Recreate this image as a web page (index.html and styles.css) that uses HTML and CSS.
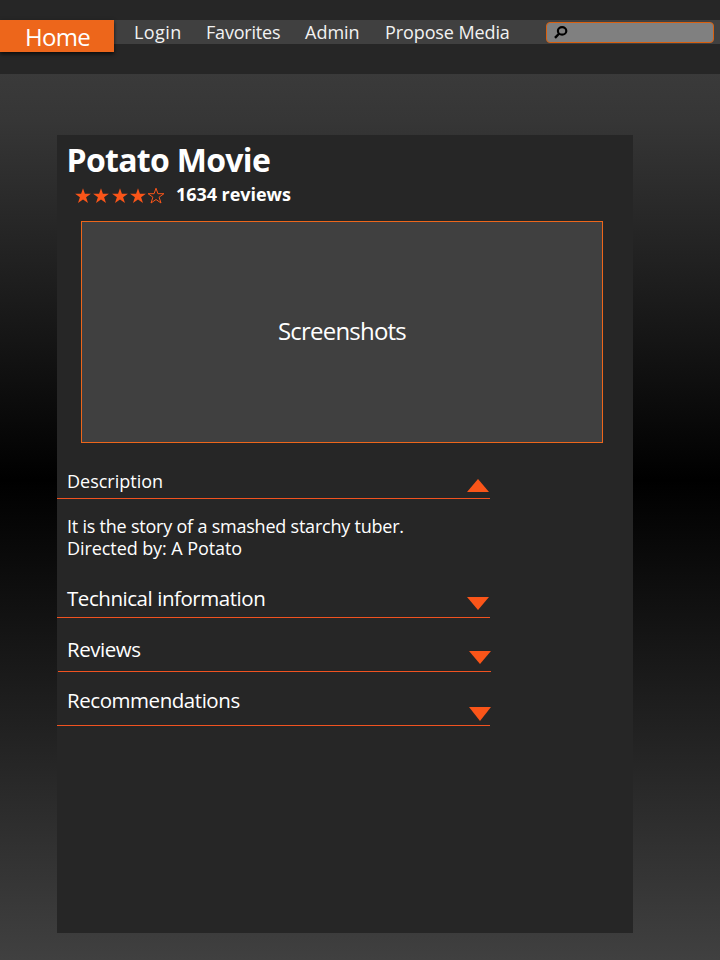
FILE: index.html
```
<!DOCTYPE html>
<html lang="en">
<head>
<meta charset="utf-8">
<title>Potato Movie</title>
<link rel="stylesheet" href="styles.css">
</head>
<body>
<svg class="defs" width="0" height="0"><defs><path id="star" d="M8 0.2 L9.9 5.7 L15.9 5.7 L11.1 9.2 L13 15 L8 11.5 L3 15 L4.9 9.2 L0.1 5.7 L6.1 5.7 Z"/></defs></svg>
<header class="header">
  <nav class="nav">
    <a class="home"><span>Home</span></a>
    <a class="link login"><span>Login</span></a>
    <a class="link favorites"><span>Favorites</span></a>
    <a class="link admin"><span>Admin</span></a>
    <a class="link propose"><span>Propose Media</span></a>
    <div class="search">
      <svg width="14" height="14" viewBox="0 0 14 14"><ellipse cx="8.1" cy="5.9" rx="4.2" ry="3.7" fill="none" stroke="#000" stroke-width="2.2"/><path d="M5.2 8.5 L1 12.8" stroke="#000" stroke-width="2.4"/></svg>
    </div>
  </nav>
</header>
<main class="panel">
  <h1 class="title"><span>Potato Movie</span></h1>
  <div class="rating">
    <div class="stars">
      <svg viewBox="0 0 16 16"><use href="#star"/></svg>
      <svg viewBox="0 0 16 16"><use href="#star"/></svg>
      <svg viewBox="0 0 16 16"><use href="#star"/></svg>
      <svg viewBox="0 0 16 16"><use href="#star"/></svg>
      <svg class="empty" viewBox="0 0 16 16"><use href="#star"/></svg>
    </div>
    <span class="count">1634 reviews</span>
  </div>
  <div class="shots"><span>Screenshots</span></div>
  <section class="row description"><span>Description</span><svg class="arrow" viewBox="0 0 22 13"><path d="M0 13 L11 0 L22 13Z"/></svg></section>
  <div class="body">
    <p class="story"><span>It is the story of a smashed starchy tuber.</span></p>
    <p class="director"><span>Directed by: A Potato</span></p>
  </div>
  <section class="row technical"><span>Technical information</span><svg class="arrow" viewBox="0 0 22 13"><path d="M0 0 L22 0 L11 13Z"/></svg></section>
  <section class="row reviews"><span>Reviews</span><svg class="arrow" viewBox="0 0 22 13"><path d="M0 0 L22 0 L11 13Z"/></svg></section>
  <section class="row recommendations"><span>Recommendations</span><svg class="arrow" viewBox="0 0 22 14"><path d="M0 0 L22 0 L11 14Z"/></svg></section>
</main>
</body>
</html>
```
FILE: styles.css
```
* { box-sizing: border-box; }
html { height: 100%; }
body {
  margin: 0;
  height: 960px;
  overflow: hidden;
  color: #fff;
  font-family: "Open Sans", "Noto Sans", sans-serif;
  font-size: 18px;
  background: linear-gradient(#404040 0, #363636 120px, #000 480px, #404040 960px);
}
.defs { display: none; }
span { white-space: nowrap; }
.header { height: 74px; padding-top: 20px; background: #262626; }
.nav { display: flex; height: 24px; background: #404040; }
.home {
  width: 114px; height: 32px; padding-left: 25px;
  font-size: 24px; line-height: 33px; letter-spacing: -0.7px; background: #ed661b;
  box-shadow: 0 2px 4px rgba(0,0,0,.7);
}
.link { line-height: 25px; color: #f2f2f2; }
.login { width: 72px; margin-left: 20px; letter-spacing: 0.4px; }
.favorites { width: 99px; letter-spacing: -0.2px; }
.admin { width: 80px; }
.propose { width: 161px; letter-spacing: -0.1px; }
.search {
  width: 168px; height: 21px; margin-top: 2px; padding: 2px 0 0 7px;
  border: 1px solid #d9600f; border-radius: 4px; background: #808080;
}
.search svg { display: block; }
.panel { width: 576px; height: 798px; margin: 61px 0 0 57px; background: #262626; }
.title { margin: 0; height: 48px; padding-left: 9.5px; font-size: 32px; line-height: 50px; letter-spacing: -0.7px; }
.rating { display: flex; height: 38px; padding-left: 18px; }
.stars { display: flex; gap: 2.3px; width: 101px; padding-top: 5px; }
.stars svg { width: 16px; height: 16px; fill: #fa5519; overflow: visible; }
.stars .empty { fill: none; stroke: #fa5519; stroke-width: 1; }
.count { font-weight: 700; line-height: 23px; letter-spacing: -0.05px; }
.shots {
  width: 522px; height: 222px; margin-left: 24px; padding-left: 196px;
  border: 1px solid #ed661b; background: #404040; font-size: 24px; line-height: 218px; letter-spacing: -0.8px;
}
.row {
  display: flex; justify-content: space-between; width: 433px;
  padding-left: 10px; border-bottom: 1px solid #f05220; font-size: 20.5px; letter-spacing: -0.45px;
}
.arrow { width: 22px; height: 13px; fill: #fa5519; margin-right: 1px; }
.description { height: 56px; font-size: 18px; line-height: 76px; letter-spacing: 0; }
.description .arrow { margin-top: 36px; }
.body { height: 79px; padding: 16px 0 0 10px; }
.body p { margin: 0; line-height: 22px; }
.body .story { letter-spacing: -0.22px; }
.body .director { letter-spacing: -0.08px; }
.technical { height: 40px; line-height: 40px; }
.technical .arrow { margin-top: 19px; }
.reviews { height: 54px; margin-left: 1px; padding-left: 9px; line-height: 63px; }
.reviews .arrow { margin-top: 33px; margin-right: 0; }
.recommendations { height: 54px; line-height: 57px; }
.recommendations .arrow { height: 14px; margin-top: 35px; margin-right: -1px; }
```
